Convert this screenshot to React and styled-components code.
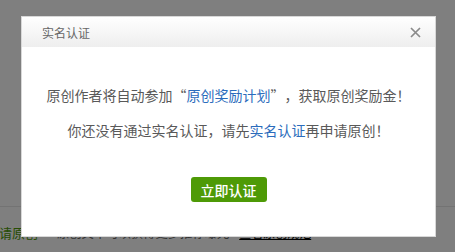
import React from "react";
import styled, { createGlobalStyle } from "styled-components";

const Global = createGlobalStyle`
  html, body { margin: 0; padding: 0; background: #fff; }
  body {
    width: 455px; height: 252px; overflow: hidden;
    font-family: "Noto Sans CJK SC", "Noto Sans", sans-serif;
  }
`;

const Page = styled.div`
  width: 455px;
  height: 252px;
  position: relative;
  overflow: hidden;
`;

const PageTop = styled.div`
  height: 206px;
  border-bottom: 1px solid #e6e6e6;
`;

const PageRow = styled.div`
  display: flex;
  align-items: baseline;
  padding-top: 18px;
  line-height: 16px;
  white-space: nowrap;
  margin-left: -14px;
`;

const GreenLabel = styled.span`
  color: #4e9a06;
  font-size: 13px;
  margin-right: 19px;
`;

const Plain = styled.span`
  color: #666;
  font-size: 12.3px;
  margin-right: 10px;
`;

const UnderLink = styled.span`
  color: #000;
  font-size: 12px;
  text-decoration: underline;
`;

const Overlay = styled.div`
  position: absolute;
  inset: 0;
  background: rgba(0, 0, 0, 0.5);
  display: flex;
  align-items: flex-start;
  padding: 16px 0 0 21px;
`;

const Dialog = styled.div`
  width: 415px;
  height: 221px;
  box-sizing: border-box;
  background: #fff;
  border: 1px solid #d8d8d8;
  display: flex;
  flex-direction: column;
`;

const Header = styled.div`
  height: 30px;
  flex: none;
  display: flex;
  align-items: center;
  justify-content: space-between;
  padding: 0 14px 0 20px;
  background: linear-gradient(#ffffff, #eeeeee);
`;

const Title = styled.span`
  font-size: 12px;
  color: #666;
`;

const Close = styled.button`
  border: 0;
  background: none;
  padding: 0;
  width: 11px;
  height: 11px;
  display: flex;
  cursor: pointer;
`;

const Body = styled.div`
  flex: 1;
  display: flex;
  flex-direction: column;
  align-items: center;
  padding-top: 38px;
`;

const Line = styled.p`
  margin: 0 0 ${(p) => p.$gap || 0}px;
  font-size: 14px;
  line-height: 20px;
  color: #595959;
  white-space: nowrap;
`;

const Punct = styled.span`
  display: inline-block;
  width: 1em;
  text-align: ${(p) => p.$align || "left"};
`;

const Link = styled.a`
  color: #2b6cbc;
  text-decoration: none;
`;

const Button = styled.button`
  margin-top: 37px;
  height: 25px;
  width: 76px;
  border: 0;
  border-radius: 3px;
  background: #4e9a06;
  color: #fff;
  font-family: inherit;
  font-size: 14px;
  font-weight: 500;
  padding: 0;
  cursor: pointer;
`;

export default function App() {
  return (
    <>
      <Global />
      <Page>
        <PageTop />
        <PageRow>
          <GreenLabel>申请原创</GreenLabel>
          <Plain>原创文章可以获得更多推荐曝光</Plain>
          <UnderLink>查看原创规范</UnderLink>
        </PageRow>
        <Overlay>
          <Dialog>
            <Header>
              <Title>实名认证</Title>
              <Close aria-label="关闭">
                <svg width="11" height="11" viewBox="0 0 11 11">
                  <path d="M1 1 L10 10 M10 1 L1 10" stroke="#8a8a8a" strokeWidth="1.7" />
                </svg>
              </Close>
            </Header>
            <Body>
              <Line $gap={15}>
                原创作者将自动参加<Punct $align="right">“</Punct>
                <Link>原创奖励计划</Link>
                <Punct>”</Punct>
                <Punct $align="center">，</Punct>获取原创奖励金！
              </Line>
              <Line>
                你还没有通过实名认证，请先<Link>实名认证</Link>再申请原创！
              </Line>
              <Button>立即认证</Button>
            </Body>
          </Dialog>
        </Overlay>
      </Page>
    </>
  );
}
